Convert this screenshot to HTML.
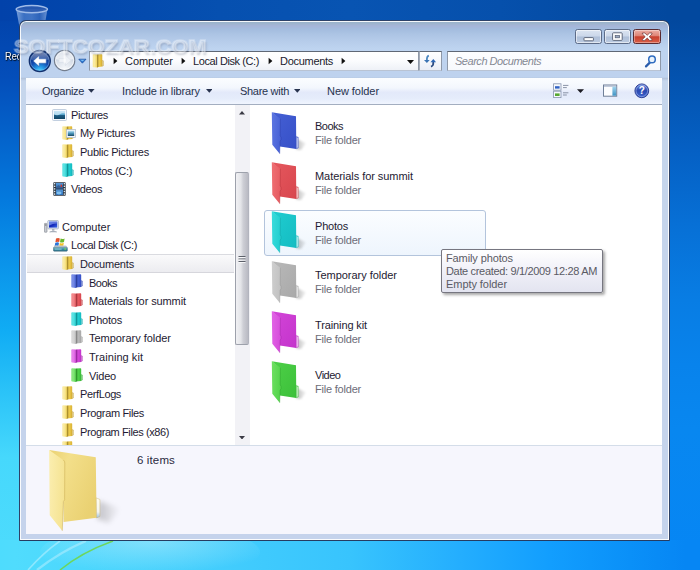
<!DOCTYPE html>
<html lang="en">
<head>
<meta charset="utf-8">
<title>Documents</title>
<style>
html,body{margin:0;padding:0;}
body{width:700px;height:570px;overflow:hidden;position:relative;
  font-family:"Liberation Sans","DejaVu Sans",sans-serif;font-size:11px;color:#1c1c30;
  background:linear-gradient(180deg,#0242aa 0,#0244ac 20px,#044eba 77px,#0464cc 140px,#047ade 200px,#0a94ea 265px,#10acf4 330px,#2cc4f8 395px,#46d8fc 457px,#4edcfd 570px);}
.a{position:absolute;}
.t{position:absolute;white-space:nowrap;line-height:16px;height:16px;}
#desk-top{left:0;top:0;width:700px;height:21px;background:linear-gradient(90deg,#0242aa 0,#0246ac 72px,#0650b0 220px,#0854b2 350px,#0650ac 500px,#02489e 670px,#02489e 700px);}
#desk-right{left:666px;top:0;width:34px;height:570px;background:linear-gradient(180deg,#02489e 0,#02489e 20px,#0560c4 150px,#0770d6 225px,#087de4 300px,#0883ec 365px,#0887f0 430px,#0686f4 557px,#0686f4 570px);}
#desk-bottom{left:0;top:540px;width:700px;height:30px;background:linear-gradient(90deg,#4edcfd 0,#50dcfd 15px,#46d0fd 180px,#38c4fd 350px,#24aefe 460px,#129efe 550px,#0a90f8 630px,#0686f4 685px,#0686f4 700px);}
#win{left:19px;top:20px;width:650.7px;height:521px;box-sizing:border-box;
  border:1px solid rgba(12,34,74,.82);border-radius:7px 7px 1px 1px;
  background:linear-gradient(180deg,#98b0c8 0px,#9cb4cc 2px,#a6b5d8 5px,#a3bcde 8px,#acc4e4 13px,#b6ccea 20px,#bed4f0 28px,#bed2ee 50px,#bed2ee 56px,#b4c4dc 57.5px,#c6d6ec 60px,#c5d5ec 120px,#c5d3ec 100%);
  box-shadow:inset 0 0 0 1px rgba(255,255,255,.9);}
/* address bar */
#addr{left:89px;top:51px;width:330px;height:20px;box-sizing:border-box;border:1px solid #8e98a8;border-top-color:#5f6876;border-bottom-color:#b9c3d3;
  background:linear-gradient(180deg,#ffffff 0,#fbfcfe 50%,#eef1f7 100%);}
#refresh{left:419px;top:51px;width:23px;height:20px;box-sizing:border-box;border:1px solid #8e98a8;border-left:1px solid #a5adba;border-top-color:#5f6876;border-bottom-color:#b9c3d3;
  background:linear-gradient(180deg,#ffffff 0,#f6f8fc 50%,#e8edf6 100%);}
#search{left:447px;top:51px;width:214px;height:20px;box-sizing:border-box;border:1px solid #8e98a8;border-top-color:#5f6876;border-bottom-color:#b9c3d3;
  background:linear-gradient(180deg,#fdfeff 0,#f7f9fd 100%);}
.crumb{color:#1a1a2c;}
.search{color:#858994;font-style:italic;}
/* toolbar */
#toolbar{left:26px;top:77.5px;width:636px;height:27.5px;box-sizing:border-box;border-bottom:1px solid #a3aec0;
  background:linear-gradient(180deg,#fbfdff 0,#f3f7fd 38%,#e3e9fa 55%,#e5ecfb 78%,#f0f5fe 100%);}
.tb{color:#27334f;}
/* content */
#content{left:26px;top:105px;width:636px;height:340.5px;background:#fff;}
#details{left:26px;top:445.3px;width:636px;height:89.2px;box-sizing:border-box;border-top:1px solid #d4dde9;background:#f6f6fd;}
.nav{color:#1e1a32;}
.fname{color:#1e1a32;}
.ftype{color:#6d6d78;}
.tip{color:#5a5a64;}
.det{color:#2a2a40;}
.desk{color:#fff;text-shadow:1px 1px 1px #000,0 0 2px rgba(0,0,0,.8);}
.wm{font-weight:bold;color:rgba(255,255,255,.30);-webkit-text-stroke:1.7px rgba(255,255,255,.30);text-shadow:1px 2px 2px rgba(70,80,110,.30);}
#navsel{left:27px;top:254px;width:207px;height:19px;box-sizing:border-box;border-top:1px solid #dadbe0;border-bottom:1px solid #d6d6dc;
  background:linear-gradient(180deg,#fafafb 0,#ececf0 100%);}
#hover{left:264px;top:209.5px;width:222px;height:46px;box-sizing:border-box;border:1px solid #b3c4dc;border-radius:3px;
  background:linear-gradient(180deg,#fbfdff 0,#eef5fd 100%);}
#tooltip{left:441px;top:249px;width:162px;height:43.5px;box-sizing:border-box;border:1px solid #767680;border-radius:2px;
  background:linear-gradient(180deg,#ffffff 0,#f0f0f8 50%,#e3e4f0 100%);box-shadow:2px 2px 3px rgba(0,0,0,.35);}
/* scrollbar */
#sb{left:235px;top:105px;width:15px;height:340px;background:#f2f2f6;}
#thumb{left:235px;top:172px;width:13.5px;height:173px;box-sizing:border-box;border:1px solid #9da1ab;border-right-color:#b2b4be;border-radius:2px;
  background:linear-gradient(90deg,#f1f1f4 0,#e4e5e9 40%,#cdced5 60%,#b9bac3 100%);}
.capbtn{top:29px;height:14.5px;box-sizing:border-box;border:1px solid #5d6c88;border-radius:2.5px;
  background:linear-gradient(180deg,#dbe4f1 0,#cbd7e9 48%,#aebfd8 52%,#bccbe1 100%);box-shadow:inset 0 0 0 1px rgba(255,255,255,.55);}
#close{background:linear-gradient(180deg,#ecb0a6 0,#de8375 45%,#c8402e 52%,#d95f48 100%);border-color:#5a2a30;box-shadow:inset 0 0 0 1px rgba(255,255,255,.35);}
</style>
</head>
<body>
<div class="a" id="desk-top"></div>
<div class="a" id="desk-right"></div>
<div class="a" id="desk-bottom"></div>
<svg class="a" style="left:12px;top:2px" width="40" height="30" viewBox="0 0 40 30">
<defs><linearGradient id="rb" x1="0" y1="0" x2="1" y2="0"><stop offset="0" stop-color="#8fb2e4" stop-opacity=".85"/><stop offset=".25" stop-color="#5a88d0" stop-opacity=".65"/><stop offset=".5" stop-color="#6a94d6" stop-opacity=".6"/><stop offset=".75" stop-color="#4a78c4" stop-opacity=".6"/><stop offset="1" stop-color="#86a8de" stop-opacity=".8"/></linearGradient></defs>
<path d="M4.2 7.2 L8.4 30 L31.6 30 L35.4 7.2 Z" fill="url(#rb)"/>
<ellipse cx="19.8" cy="7.2" rx="15.6" ry="3.6" fill="#2f5cb0" fill-opacity=".8" stroke="#9fbbe8" stroke-width="1.5"/>
</svg><svg class="a" style="left:0;top:541px" width="320" height="29" viewBox="0 541 320 29">
<defs><radialGradient id="sw1" cx=".5" cy=".3" r=".6"><stop offset="0" stop-color="#aeeafc" stop-opacity=".55"/><stop offset="1" stop-color="#aeeafc" stop-opacity="0"/></radialGradient></defs>
<ellipse cx="150" cy="552" rx="110" ry="26" fill="url(#sw1)"/>
<path d="M28 570 Q44 552 60 541" stroke="#d8f6ff" stroke-opacity=".45" stroke-width="1.6" fill="none"/>
<path d="M37 570 Q60 552 86 541" stroke="#d8f6ff" stroke-opacity=".4" stroke-width="2.4" fill="none"/>
<path d="M60 570 Q82 552 113 541" stroke="#6fd64a" stroke-opacity=".9" stroke-width="1.5" fill="none"/>
</svg><span class="t desk" style="left:5.2px;top:48.1px;font-size:11.5px;transform:scaleX(.8);transform-origin:0 0;">Recycle Bin</span>
<div class="a" id="win"></div>
<div class="a capbtn" style="left:575px;width:27px"></div>
<div class="a capbtn" style="left:604px;width:27px"></div>
<div class="a capbtn" id="close" style="left:633px;width:28px"></div>
<div class="a" id="addr"></div>
<div class="a" id="refresh"></div>
<div class="a" id="search"></div>
<div class="a" id="toolbar"></div>
<div class="a" id="content"></div>
<div class="a" id="details"></div>
<div class="a" id="navsel"></div>
<div class="a" id="sb"></div>
<div class="a" id="thumb"></div>
<div class="a" id="hover"></div>
<svg class="a" style="left:26px;top:47px" width="64" height="28" viewBox="0 0 64 28">
<defs>
<radialGradient id="nb1" cx=".5" cy="1" r=".8"><stop offset="0" stop-color="#58dcff"/><stop offset=".3" stop-color="#2496e4"/><stop offset=".62" stop-color="#134cb0"/><stop offset="1" stop-color="#0e3488"/></radialGradient>
<linearGradient id="nb2" x1="0" y1="0" x2="0" y2="1"><stop offset="0" stop-color="#fff" stop-opacity=".5"/><stop offset="1" stop-color="#fff" stop-opacity=".08"/></linearGradient>
<radialGradient id="nb3" cx=".5" cy=".9" r=".8"><stop offset="0" stop-color="#f6f8fb"/><stop offset=".6" stop-color="#d8dfe9"/><stop offset="1" stop-color="#bcc7d8"/></radialGradient>
</defs>
<circle cx="13.8" cy="14" r="10.5" fill="url(#nb1)" stroke="#12306e" stroke-width="1.3"/>
<circle cx="13.8" cy="14" r="9.4" fill="none" stroke="#9ecbf4" stroke-opacity=".55" stroke-width=".8"/>
<path d="M4.6 12.6 A9.3 9.3 0 0 1 23 12.6 Q13.8 16.4 4.6 12.6 Z" fill="url(#nb2)"/>
<path d="M7.2 14 L13.2 8.4 L13.2 11.8 L20.2 11.8 L20.2 16.2 L13.2 16.2 L13.2 19.6 Z" fill="#fff" stroke="#2a5aa8" stroke-width=".5"/>
<circle cx="38.6" cy="13.4" r="10.2" fill="url(#nb3)" stroke="#747e8e" stroke-width="1.1"/>
<circle cx="38.6" cy="13.4" r="9" fill="none" stroke="#fff" stroke-opacity=".8" stroke-width=".9"/>
<path d="M29.8 12 A8.9 8.9 0 0 1 47.4 12 Q38.6 15.4 29.8 12 Z" fill="#fff" fill-opacity=".55"/>
<path d="M45 13.4 L39.4 8.2 L39.4 11.4 L33 11.4 L33 15.4 L39.4 15.4 L39.4 18.6 Z" fill="#eef1f6" stroke="#d2d9e3" stroke-width=".5"/>
<rect x="37.6" y="4.4" width="2.2" height="12" rx="1" fill="#fff" fill-opacity=".7"/>
<path d="M52.8 12.2 L60 12.2 L56.4 16.2 Z" fill="#2a76d0" stroke="#1a4c9c" stroke-width=".7" stroke-linejoin="round"/>
<path d="M54 12.7 L58.8 12.7 L56.4 14.2 Z" fill="#8fd0ff" fill-opacity=".8"/>
</svg>
<svg class="a" style="left:575px;top:29px" width="87" height="16" viewBox="0 0 87 16">
<rect x="9" y="8.6" width="9.4" height="3.2" rx=".6" fill="#fff" stroke="#525c70" stroke-width=".9"/>
<rect x="37.6" y="3.8" width="9.6" height="7.6" rx=".8" fill="#fff" stroke="#525c70" stroke-width=".9"/>
<rect x="40.2" y="6.6" width="4.4" height="2.2" fill="#9aa8c0" stroke="#525c70" stroke-width=".7"/>
<path d="M67.4 4 L69.8 4 L72.2 6.3 L74.6 4 L77 4 L77 5 L74.2 7.7 L77 10.4 L77 11.4 L74.6 11.4 L72.2 9.1 L69.8 11.4 L67.4 11.4 L67.4 10.4 L70.2 7.7 L67.4 5 Z" fill="#fff" stroke="#6a3030" stroke-width=".7" stroke-linejoin="round"/>
</svg>
<svg class="a" style="left:92.3px;top:53.8px" width="12.4" height="14" viewBox="0 0 12 14.4">
<defs><linearGradient id="g63" x1="0" y1="0" x2="1" y2="0"><stop offset="0" stop-color="#f9e68e"/><stop offset=".3" stop-color="#faeca7"/><stop offset="1" stop-color="#f2d65c"/></linearGradient>
<linearGradient id="g64" x1="0" y1="0" x2="1" y2="0"><stop offset="0" stop-color="#aa8b2a"/><stop offset=".45" stop-color="#eccb4c"/><stop offset="1" stop-color="#dab236"/></linearGradient></defs>
<path d="M4.8 .5 L9.5 .3 Q10.2 .3 10.2 1 L10.2 12.9 L4.8 13.6 Z" fill="url(#g64)"/>
<path d="M10.2 6.6 L11.4 7 L11.4 12 L10.2 12.5 Z" fill="#f3dd8b" stroke="#a88224" stroke-width=".35"/>
<path d="M.4 1 Q.4 .3 1.1 .3 L4.5 .5 Q5.1 .6 5.1 1.3 L5.1 14 L1 13.5 Q.4 13.4 .4 12.8 Z" fill="url(#g63)"/>
<path d="M5.25 1 L5.25 13.9" stroke="#7e621b" stroke-width=".55" stroke-opacity=".75"/>
</svg>
<svg class="a" style="left:112.5px;top:57px" width="5" height="8" viewBox="0 0 5 8"><path d="M.6 .8 L4.4 4 L.6 7.2 Z" fill="#111"/></svg>
<svg class="a" style="left:180.5px;top:57px" width="5" height="8" viewBox="0 0 5 8"><path d="M.6 .8 L4.4 4 L.6 7.2 Z" fill="#111"/></svg>
<svg class="a" style="left:267.5px;top:57px" width="5" height="8" viewBox="0 0 5 8"><path d="M.6 .8 L4.4 4 L.6 7.2 Z" fill="#111"/></svg>
<svg class="a" style="left:341.0px;top:57px" width="5" height="8" viewBox="0 0 5 8"><path d="M.6 .8 L4.4 4 L.6 7.2 Z" fill="#111"/></svg>
<svg class="a" style="left:406.7px;top:59.5px" width="7" height="4" viewBox="0 0 7 4"><path d="M0 0 L7 0 L3.5 4 Z" fill="#111"/></svg>
<svg class="a" style="left:423px;top:54px" width="15" height="14" viewBox="0 0 15 14">
<path d="M5.8 1.5 Q3.5 2.6 3.9 6.4" fill="none" stroke="#4a86c0" stroke-width="1.7"/>
<path d="M1 5.9 L6.7 5.9 L3.9 9 Z" fill="#3a74b4"/>
<path d="M10.3 7.8 Q10.7 11.6 8 12.6" fill="none" stroke="#2a4a80" stroke-width="1.7"/>
<path d="M7.5 8.3 L13.1 8.3 L10.3 5.1 Z" fill="#2c66b4"/>
</svg>
<svg class="a" style="left:644px;top:54px" width="13" height="14" viewBox="0 0 13 14">
<path d="M6 8.4 L2 12.4" stroke="#2a5cab" stroke-width="2.2" stroke-linecap="round"/>
<circle cx="8" cy="5.4" r="3.3" fill="#e8f2fc" stroke="#2f6cc0" stroke-width="1.5"/>
</svg>
<svg class="a" style="left:553px;top:82px" width="100" height="18" viewBox="0 0 100 18">
<defs><linearGradient id="hp" x1="0" y1="0" x2="0" y2="1"><stop offset="0" stop-color="#6f8fe0"/><stop offset=".5" stop-color="#2a48b0"/><stop offset="1" stop-color="#3f66d0"/></linearGradient>
<linearGradient id="pp" x1="0" y1="0" x2="0" y2="1"><stop offset="0" stop-color="#9fd4ee"/><stop offset="1" stop-color="#3f93c4"/></linearGradient></defs>
<rect x=".6" y="1.8" width="7.4" height="6.4" fill="#f6f9fd" stroke="#8794ac" stroke-width=".8"/>
<rect x="2" y="4.2" width="4.6" height="2.4" fill="#2f62c4"/>
<rect x=".6" y="9.2" width="7.4" height="6.4" fill="#f6f9fd" stroke="#8794ac" stroke-width=".8"/>
<rect x="2" y="11.4" width="4.6" height="2.6" fill="#58a832"/>
<path d="M10 3.4 H15.4 M10 5.6 H13.8 M10 10.8 H15.4 M10 13 H13.8" stroke="#8a93a6" stroke-width="1"/>
<path d="M24 7.2 L31 7.2 L27.5 11 Z" fill="#1a1a22"/>
<rect x="50.5" y="3" width="13.2" height="11.2" fill="#fcfdff" stroke="#6f7f98" stroke-width="1"/>
<rect x="51" y="3.5" width="12.2" height="1.2" fill="#a9b6cc"/>
<rect x="59.4" y="4.7" width="3.8" height="9" fill="url(#pp)"/>
<circle cx="88.8" cy="8.8" r="6.9" fill="url(#hp)" stroke="#26388c" stroke-width=".9"/>
<circle cx="88.8" cy="8.8" r="5.8" fill="none" stroke="#b9caf4" stroke-opacity=".7" stroke-width=".7"/>
<text x="88.8" y="12.4" font-family="Liberation Sans, sans-serif" font-weight="bold" font-size="10" fill="#fff" text-anchor="middle">?</text>
</svg>
<svg class="a" style="left:239.0px;top:111.25px" width="6" height="3.5" viewBox="0 0 7 4"><path d="M0 4 L7 4 L3.5 0 Z" fill="#3a3a44"/></svg><svg class="a" style="left:239.0px;top:435.75px" width="6" height="3.5" viewBox="0 0 7 4"><path d="M0 0 L7 0 L3.5 4 Z" fill="#3a3a44"/></svg><svg class="a" style="left:238px;top:255px" width="8" height="8" viewBox="0 0 8 8"><path d="M.5 1.5 H7.5 M.5 4 H7.5 M.5 6.5 H7.5" stroke="#5c606a" stroke-width="1"/><path d="M.5 2.5 H7.5 M.5 5 H7.5 M.5 7.5 H7.5" stroke="#fff" stroke-opacity=".8" stroke-width="1"/></svg>
<svg class="a" style="left:88.3px;top:89.1px" width="6.6" height="3.8" viewBox="0 0 7 4"><path d="M0 0 L7 0 L3.5 4 Z" fill="#27334f"/></svg>
<svg class="a" style="left:205.89999999999998px;top:89.1px" width="6.6" height="3.8" viewBox="0 0 7 4"><path d="M0 0 L7 0 L3.5 4 Z" fill="#27334f"/></svg>
<svg class="a" style="left:293.5px;top:89.1px" width="6.6" height="3.8" viewBox="0 0 7 4"><path d="M0 0 L7 0 L3.5 4 Z" fill="#27334f"/></svg>
<svg class="a" style="left:52px;top:109.0px" width="15" height="12" viewBox="0 0 15 12">
<defs><linearGradient id="g1" x1="0" y1="0" x2="0" y2="1"><stop offset="0" stop-color="#b8e0f4"/><stop offset=".45" stop-color="#5aa6cc"/><stop offset=".55" stop-color="#1d5f86"/><stop offset="1" stop-color="#0f4464"/></linearGradient></defs>
<rect x=".5" y=".5" width="14" height="11" rx="1" fill="#f4f8fc" stroke="#b4c4d8" stroke-width=".8"/>
<rect x="2" y="2" width="11" height="8" fill="url(#g1)"/>
<path d="M2 5 Q5 7.5 8 5.2 T13 4.6 L13 2 L2 2 Z" fill="#cfeaf8" fill-opacity=".75"/>
</svg>
<svg class="a" style="left:62.4px;top:125.53px" width="12" height="14.4" viewBox="0 0 12 14.4">
<defs><linearGradient id="g3" x1="0" y1="0" x2="1" y2="0"><stop offset="0" stop-color="#f9e68e"/><stop offset=".3" stop-color="#faeca7"/><stop offset="1" stop-color="#f2d65c"/></linearGradient>
<linearGradient id="g4" x1="0" y1="0" x2="1" y2="0"><stop offset="0" stop-color="#aa8b2a"/><stop offset=".45" stop-color="#eccb4c"/><stop offset="1" stop-color="#dab236"/></linearGradient></defs>
<path d="M4.8 .5 L9.5 .3 Q10.2 .3 10.2 1 L10.2 12.9 L4.8 13.6 Z" fill="url(#g4)"/>
<path d="M10.2 6.6 L11.4 7 L11.4 12 L10.2 12.5 Z" fill="#f3dd8b" stroke="#a88224" stroke-width=".35"/>
<path d="M.4 1 Q.4 .3 1.1 .3 L4.5 .5 Q5.1 .6 5.1 1.3 L5.1 14 L1 13.5 Q.4 13.4 .4 12.8 Z" fill="url(#g3)"/>
<path d="M5.25 1 L5.25 13.9" stroke="#7e621b" stroke-width=".55" stroke-opacity=".75"/>
</svg><svg class="a" style="left:66.4px;top:129.03px" width="10" height="9" viewBox="0 0 10 9">
<defs><linearGradient id="g2" x1="0" y1="0" x2="0" y2="1"><stop offset="0" stop-color="#b8e0f4"/><stop offset=".5" stop-color="#4a94b8"/><stop offset="1" stop-color="#174a68"/></linearGradient></defs>
<rect x=".4" y=".4" width="9.2" height="8.2" fill="#f2f6fa" stroke="#aab8c8" stroke-width=".7"/>
<rect x="1.8" y="1.8" width="6.4" height="5.2" fill="url(#g2)"/></svg>
<svg class="a" style="left:62.3px;top:143.96px" width="12" height="14.4" viewBox="0 0 12 14.4">
<defs><linearGradient id="g5" x1="0" y1="0" x2="1" y2="0"><stop offset="0" stop-color="#f9e68e"/><stop offset=".3" stop-color="#faeca7"/><stop offset="1" stop-color="#f2d65c"/></linearGradient>
<linearGradient id="g6" x1="0" y1="0" x2="1" y2="0"><stop offset="0" stop-color="#aa8b2a"/><stop offset=".45" stop-color="#eccb4c"/><stop offset="1" stop-color="#dab236"/></linearGradient></defs>
<path d="M4.8 .5 L9.5 .3 Q10.2 .3 10.2 1 L10.2 12.9 L4.8 13.6 Z" fill="url(#g6)"/>
<path d="M10.2 6.6 L11.4 7 L11.4 12 L10.2 12.5 Z" fill="#f3dd8b" stroke="#a88224" stroke-width=".35"/>
<path d="M.4 1 Q.4 .3 1.1 .3 L4.5 .5 Q5.1 .6 5.1 1.3 L5.1 14 L1 13.5 Q.4 13.4 .4 12.8 Z" fill="url(#g5)"/>
<path d="M5.25 1 L5.25 13.9" stroke="#7e621b" stroke-width=".55" stroke-opacity=".75"/>
</svg>
<svg class="a" style="left:62.3px;top:162.59px" width="12" height="14.4" viewBox="0 0 12 14.4">
<defs><linearGradient id="g7" x1="0" y1="0" x2="1" y2="0"><stop offset="0" stop-color="#3adcdc"/><stop offset=".3" stop-color="#65e4e4"/><stop offset="1" stop-color="#22cfd0"/></linearGradient>
<linearGradient id="g8" x1="0" y1="0" x2="1" y2="0"><stop offset="0" stop-color="#109397"/><stop offset=".45" stop-color="#20cdd0"/><stop offset="1" stop-color="#14bcc2"/></linearGradient></defs>
<path d="M4.8 .5 L9.5 .3 Q10.2 .3 10.2 1 L10.2 12.9 L4.8 13.6 Z" fill="url(#g8)"/>
<path d="M10.2 6.6 L11.4 7 L11.4 12 L10.2 12.5 Z" fill="#6edee0" stroke="#0f9499" stroke-width=".35"/>
<path d="M.4 1 Q.4 .3 1.1 .3 L4.5 .5 Q5.1 .6 5.1 1.3 L5.1 14 L1 13.5 Q.4 13.4 .4 12.8 Z" fill="url(#g7)"/>
<path d="M5.25 1 L5.25 13.9" stroke="#0b6f73" stroke-width=".55" stroke-opacity=".75"/>
</svg>
<svg class="a" style="left:53.4px;top:181.82px" width="13" height="14" viewBox="0 0 13 14">
<defs><linearGradient id="g9" x1="0" y1="0" x2="0" y2="1"><stop offset="0" stop-color="#5a9ad8"/><stop offset="1" stop-color="#2a6cb8"/></linearGradient></defs>
<rect x=".3" y=".2" width="12.4" height="13.6" rx=".8" fill="#28323e"/>
<rect x="0.9" y="1.0" width="1.4" height="1.4" fill="#dfe8f0"/><rect x="10.7" y="1.0" width="1.4" height="1.4" fill="#dfe8f0"/><rect x="0.9" y="3.6" width="1.4" height="1.4" fill="#dfe8f0"/><rect x="10.7" y="3.6" width="1.4" height="1.4" fill="#dfe8f0"/><rect x="0.9" y="6.2" width="1.4" height="1.4" fill="#dfe8f0"/><rect x="10.7" y="6.2" width="1.4" height="1.4" fill="#dfe8f0"/><rect x="0.9" y="8.8" width="1.4" height="1.4" fill="#dfe8f0"/><rect x="10.7" y="8.8" width="1.4" height="1.4" fill="#dfe8f0"/><rect x="0.9" y="11.4" width="1.4" height="1.4" fill="#dfe8f0"/><rect x="10.7" y="11.4" width="1.4" height="1.4" fill="#dfe8f0"/>
<rect x="3" y="1" width="7" height="5.4" fill="url(#g9)"/>
<rect x="3" y="7.4" width="7" height="5.6" fill="url(#g9)"/>
<path d="M3 5 L5.5 3 L7.5 4.6 L10 2.6 L10 6.4 L3 6.4 Z" fill="#3a5a8a" fill-opacity=".8"/>
<rect x="7.6" y="2.6" width="1.4" height="2.4" fill="#d03a30"/>
<ellipse cx="6" cy="11" rx="2.6" ry="1.4" fill="#7fc0f0"/>
</svg>
<svg class="a" style="left:43.6px;top:219.88px" width="15" height="13" viewBox="0 0 15 13">
<defs><linearGradient id="g10" x1="0" y1="0" x2="1" y2="1"><stop offset="0" stop-color="#2a4fe0"/><stop offset=".5" stop-color="#1428b8"/><stop offset="1" stop-color="#3a6ae8"/></linearGradient></defs>
<rect x=".4" y="3.4" width="2.6" height="8.8" rx=".5" fill="#c8ccd2" stroke="#7c828c" stroke-width=".6"/>
<rect x="1" y="4.6" width="1.4" height=".8" fill="#555"/>
<rect x="3.8" y=".5" width="10.6" height="8.4" rx=".8" fill="#e6ecf4" stroke="#9aa6b8" stroke-width=".7"/>
<rect x="5" y="1.6" width="8.2" height="6" fill="url(#g10)"/>
<path d="M5 1.6 L13.2 1.6 L13.2 3.4 Q9 3.2 5 5.6 Z" fill="#9ab4f8" fill-opacity=".55"/>
<rect x="8" y="9" width="2.4" height="1.6" fill="#aab2be"/>
<path d="M5.6 12 Q9.2 10 12.8 12 Z" fill="#b4bcc8" stroke="#8a929e" stroke-width=".4"/>
</svg>
<svg class="a" style="left:52.6px;top:236.70999999999998px" width="15" height="15" viewBox="0 0 15 15">
<defs><linearGradient id="g11" x1="0" y1="0" x2="0" y2="1"><stop offset="0" stop-color="#7ab8c8"/><stop offset=".5" stop-color="#3a8ea4"/><stop offset="1" stop-color="#2a6e88"/></linearGradient></defs>
<path d="M3 1.6 Q5 .4 6.8 1.4 L6.2 5 Q4.6 4.2 2.4 5.2 Z" fill="#e0502c"/>
<path d="M7.6 1.6 Q9.4 2.6 11.6 1.4 L11 5 Q8.8 6 7 5.2 Z" fill="#6cb82c"/>
<path d="M2.2 5.9 Q4.4 4.9 6 5.8 L5.4 9.2 Q3.6 8.4 1.6 9.4 Z" fill="#2a74d8"/>
<path d="M6.8 6 Q8.6 6.9 10.8 5.8 L10.2 9.2 Q8 10.2 6.2 9.4 Z" fill="#f4c020"/>
<path d="M1.6 8.6 L13 8.6 L14.4 10.4 L.4 10.4 Z" fill="#c4ccd4"/>
<rect x=".4" y="10.2" width="14" height="4" rx=".8" fill="url(#g11)" stroke="#4a6a7a" stroke-width=".5"/>
<rect x="1.6" y="11.6" width="7" height="1" fill="#a8dce8" fill-opacity=".8"/>
<rect x="11.4" y="11.4" width="1.6" height="1.2" fill="#7fe04a"/>
</svg>
<svg class="a" style="left:62.3px;top:255.73999999999998px" width="12" height="14.4" viewBox="0 0 12 14.4">
<defs><linearGradient id="g12" x1="0" y1="0" x2="1" y2="0"><stop offset="0" stop-color="#f9e68e"/><stop offset=".3" stop-color="#faeca7"/><stop offset="1" stop-color="#f2d65c"/></linearGradient>
<linearGradient id="g13" x1="0" y1="0" x2="1" y2="0"><stop offset="0" stop-color="#aa8b2a"/><stop offset=".45" stop-color="#eccb4c"/><stop offset="1" stop-color="#dab236"/></linearGradient></defs>
<path d="M4.8 .5 L9.5 .3 Q10.2 .3 10.2 1 L10.2 12.9 L4.8 13.6 Z" fill="url(#g13)"/>
<path d="M10.2 6.6 L11.4 7 L11.4 12 L10.2 12.5 Z" fill="#f3dd8b" stroke="#a88224" stroke-width=".35"/>
<path d="M.4 1 Q.4 .3 1.1 .3 L4.5 .5 Q5.1 .6 5.1 1.3 L5.1 14 L1 13.5 Q.4 13.4 .4 12.8 Z" fill="url(#g12)"/>
<path d="M5.25 1 L5.25 13.9" stroke="#7e621b" stroke-width=".55" stroke-opacity=".75"/>
</svg>
<svg class="a" style="left:71.3px;top:274.36999999999995px" width="12" height="14.4" viewBox="0 0 12 14.4">
<defs><linearGradient id="g14" x1="0" y1="0" x2="1" y2="0"><stop offset="0" stop-color="#5c76e2"/><stop offset=".3" stop-color="#8094e8"/><stop offset="1" stop-color="#4862d6"/></linearGradient>
<linearGradient id="g15" x1="0" y1="0" x2="1" y2="0"><stop offset="0" stop-color="#2a3e9c"/><stop offset=".45" stop-color="#4560d4"/><stop offset="1" stop-color="#3650c8"/></linearGradient></defs>
<path d="M4.8 .5 L9.5 .3 Q10.2 .3 10.2 1 L10.2 12.9 L4.8 13.6 Z" fill="url(#g15)"/>
<path d="M10.2 6.6 L11.4 7 L11.4 12 L10.2 12.5 Z" fill="#8698e3" stroke="#2438a0" stroke-width=".35"/>
<path d="M.4 1 Q.4 .3 1.1 .3 L4.5 .5 Q5.1 .6 5.1 1.3 L5.1 14 L1 13.5 Q.4 13.4 .4 12.8 Z" fill="url(#g14)"/>
<path d="M5.25 1 L5.25 13.9" stroke="#1b2a78" stroke-width=".55" stroke-opacity=".75"/>
</svg>
<svg class="a" style="left:71.3px;top:292.99999999999994px" width="12" height="14.4" viewBox="0 0 12 14.4">
<defs><linearGradient id="g16" x1="0" y1="0" x2="1" y2="0"><stop offset="0" stop-color="#f07074"/><stop offset=".3" stop-color="#f38f93"/><stop offset="1" stop-color="#e65c62"/></linearGradient>
<linearGradient id="g17" x1="0" y1="0" x2="1" y2="0"><stop offset="0" stop-color="#a8373d"/><stop offset=".45" stop-color="#e5585e"/><stop offset="1" stop-color="#d8464e"/></linearGradient></defs>
<path d="M4.8 .5 L9.5 .3 Q10.2 .3 10.2 1 L10.2 12.9 L4.8 13.6 Z" fill="url(#g17)"/>
<path d="M10.2 6.6 L11.4 7 L11.4 12 L10.2 12.5 Z" fill="#ee9296" stroke="#a82830" stroke-width=".35"/>
<path d="M.4 1 Q.4 .3 1.1 .3 L4.5 .5 Q5.1 .6 5.1 1.3 L5.1 14 L1 13.5 Q.4 13.4 .4 12.8 Z" fill="url(#g16)"/>
<path d="M5.25 1 L5.25 13.9" stroke="#7e1e24" stroke-width=".55" stroke-opacity=".75"/>
</svg>
<svg class="a" style="left:71.3px;top:311.62999999999994px" width="12" height="14.4" viewBox="0 0 12 14.4">
<defs><linearGradient id="g18" x1="0" y1="0" x2="1" y2="0"><stop offset="0" stop-color="#3adcdc"/><stop offset=".3" stop-color="#65e4e4"/><stop offset="1" stop-color="#22cfd0"/></linearGradient>
<linearGradient id="g19" x1="0" y1="0" x2="1" y2="0"><stop offset="0" stop-color="#109397"/><stop offset=".45" stop-color="#20cdd0"/><stop offset="1" stop-color="#14bcc2"/></linearGradient></defs>
<path d="M4.8 .5 L9.5 .3 Q10.2 .3 10.2 1 L10.2 12.9 L4.8 13.6 Z" fill="url(#g19)"/>
<path d="M10.2 6.6 L11.4 7 L11.4 12 L10.2 12.5 Z" fill="#6edee0" stroke="#0f9499" stroke-width=".35"/>
<path d="M.4 1 Q.4 .3 1.1 .3 L4.5 .5 Q5.1 .6 5.1 1.3 L5.1 14 L1 13.5 Q.4 13.4 .4 12.8 Z" fill="url(#g18)"/>
<path d="M5.25 1 L5.25 13.9" stroke="#0b6f73" stroke-width=".55" stroke-opacity=".75"/>
</svg>
<svg class="a" style="left:71.3px;top:330.26px" width="12" height="14.4" viewBox="0 0 12 14.4">
<defs><linearGradient id="g20" x1="0" y1="0" x2="1" y2="0"><stop offset="0" stop-color="#cfcfcf"/><stop offset=".3" stop-color="#dadada"/><stop offset="1" stop-color="#c2c2c2"/></linearGradient>
<linearGradient id="g21" x1="0" y1="0" x2="1" y2="0"><stop offset="0" stop-color="#848484"/><stop offset=".45" stop-color="#b9b9b9"/><stop offset="1" stop-color="#a9a9a9"/></linearGradient></defs>
<path d="M4.8 .5 L9.5 .3 Q10.2 .3 10.2 1 L10.2 12.9 L4.8 13.6 Z" fill="url(#g21)"/>
<path d="M10.2 6.6 L11.4 7 L11.4 12 L10.2 12.5 Z" fill="#d2d2d2" stroke="#8a8a8a" stroke-width=".35"/>
<path d="M.4 1 Q.4 .3 1.1 .3 L4.5 .5 Q5.1 .6 5.1 1.3 L5.1 14 L1 13.5 Q.4 13.4 .4 12.8 Z" fill="url(#g20)"/>
<path d="M5.25 1 L5.25 13.9" stroke="#686868" stroke-width=".55" stroke-opacity=".75"/>
</svg>
<svg class="a" style="left:71.3px;top:348.89px" width="12" height="14.4" viewBox="0 0 12 14.4">
<defs><linearGradient id="g22" x1="0" y1="0" x2="1" y2="0"><stop offset="0" stop-color="#e265e6"/><stop offset=".3" stop-color="#e887ec"/><stop offset="1" stop-color="#d64cdb"/></linearGradient>
<linearGradient id="g23" x1="0" y1="0" x2="1" y2="0"><stop offset="0" stop-color="#99299f"/><stop offset=".45" stop-color="#d345d8"/><stop offset="1" stop-color="#c434cc"/></linearGradient></defs>
<path d="M4.8 .5 L9.5 .3 Q10.2 .3 10.2 1 L10.2 12.9 L4.8 13.6 Z" fill="url(#g23)"/>
<path d="M10.2 6.6 L11.4 7 L11.4 12 L10.2 12.5 Z" fill="#e286e6" stroke="#96209c" stroke-width=".35"/>
<path d="M.4 1 Q.4 .3 1.1 .3 L4.5 .5 Q5.1 .6 5.1 1.3 L5.1 14 L1 13.5 Q.4 13.4 .4 12.8 Z" fill="url(#g22)"/>
<path d="M5.25 1 L5.25 13.9" stroke="#701875" stroke-width=".55" stroke-opacity=".75"/>
</svg>
<svg class="a" style="left:71.3px;top:367.52px" width="12" height="14.4" viewBox="0 0 12 14.4">
<defs><linearGradient id="g24" x1="0" y1="0" x2="1" y2="0"><stop offset="0" stop-color="#6fe062"/><stop offset=".3" stop-color="#8fe785"/><stop offset="1" stop-color="#54d44c"/></linearGradient>
<linearGradient id="g25" x1="0" y1="0" x2="1" y2="0"><stop offset="0" stop-color="#2f962d"/><stop offset=".45" stop-color="#4ed048"/><stop offset="1" stop-color="#3cc03a"/></linearGradient></defs>
<path d="M4.8 .5 L9.5 .3 Q10.2 .3 10.2 1 L10.2 12.9 L4.8 13.6 Z" fill="url(#g25)"/>
<path d="M10.2 6.6 L11.4 7 L11.4 12 L10.2 12.5 Z" fill="#8ce088" stroke="#249424" stroke-width=".35"/>
<path d="M.4 1 Q.4 .3 1.1 .3 L4.5 .5 Q5.1 .6 5.1 1.3 L5.1 14 L1 13.5 Q.4 13.4 .4 12.8 Z" fill="url(#g24)"/>
<path d="M5.25 1 L5.25 13.9" stroke="#1b6f1b" stroke-width=".55" stroke-opacity=".75"/>
</svg>
<svg class="a" style="left:62.3px;top:386.15px" width="12" height="14.4" viewBox="0 0 12 14.4">
<defs><linearGradient id="g26" x1="0" y1="0" x2="1" y2="0"><stop offset="0" stop-color="#f9e68e"/><stop offset=".3" stop-color="#faeca7"/><stop offset="1" stop-color="#f2d65c"/></linearGradient>
<linearGradient id="g27" x1="0" y1="0" x2="1" y2="0"><stop offset="0" stop-color="#aa8b2a"/><stop offset=".45" stop-color="#eccb4c"/><stop offset="1" stop-color="#dab236"/></linearGradient></defs>
<path d="M4.8 .5 L9.5 .3 Q10.2 .3 10.2 1 L10.2 12.9 L4.8 13.6 Z" fill="url(#g27)"/>
<path d="M10.2 6.6 L11.4 7 L11.4 12 L10.2 12.5 Z" fill="#f3dd8b" stroke="#a88224" stroke-width=".35"/>
<path d="M.4 1 Q.4 .3 1.1 .3 L4.5 .5 Q5.1 .6 5.1 1.3 L5.1 14 L1 13.5 Q.4 13.4 .4 12.8 Z" fill="url(#g26)"/>
<path d="M5.25 1 L5.25 13.9" stroke="#7e621b" stroke-width=".55" stroke-opacity=".75"/>
</svg>
<svg class="a" style="left:62.3px;top:404.78px" width="12" height="14.4" viewBox="0 0 12 14.4">
<defs><linearGradient id="g28" x1="0" y1="0" x2="1" y2="0"><stop offset="0" stop-color="#f9e68e"/><stop offset=".3" stop-color="#faeca7"/><stop offset="1" stop-color="#f2d65c"/></linearGradient>
<linearGradient id="g29" x1="0" y1="0" x2="1" y2="0"><stop offset="0" stop-color="#aa8b2a"/><stop offset=".45" stop-color="#eccb4c"/><stop offset="1" stop-color="#dab236"/></linearGradient></defs>
<path d="M4.8 .5 L9.5 .3 Q10.2 .3 10.2 1 L10.2 12.9 L4.8 13.6 Z" fill="url(#g29)"/>
<path d="M10.2 6.6 L11.4 7 L11.4 12 L10.2 12.5 Z" fill="#f3dd8b" stroke="#a88224" stroke-width=".35"/>
<path d="M.4 1 Q.4 .3 1.1 .3 L4.5 .5 Q5.1 .6 5.1 1.3 L5.1 14 L1 13.5 Q.4 13.4 .4 12.8 Z" fill="url(#g28)"/>
<path d="M5.25 1 L5.25 13.9" stroke="#7e621b" stroke-width=".55" stroke-opacity=".75"/>
</svg>
<svg class="a" style="left:62.3px;top:423.40999999999997px" width="12" height="14.4" viewBox="0 0 12 14.4">
<defs><linearGradient id="g30" x1="0" y1="0" x2="1" y2="0"><stop offset="0" stop-color="#f9e68e"/><stop offset=".3" stop-color="#faeca7"/><stop offset="1" stop-color="#f2d65c"/></linearGradient>
<linearGradient id="g31" x1="0" y1="0" x2="1" y2="0"><stop offset="0" stop-color="#aa8b2a"/><stop offset=".45" stop-color="#eccb4c"/><stop offset="1" stop-color="#dab236"/></linearGradient></defs>
<path d="M4.8 .5 L9.5 .3 Q10.2 .3 10.2 1 L10.2 12.9 L4.8 13.6 Z" fill="url(#g31)"/>
<path d="M10.2 6.6 L11.4 7 L11.4 12 L10.2 12.5 Z" fill="#f3dd8b" stroke="#a88224" stroke-width=".35"/>
<path d="M.4 1 Q.4 .3 1.1 .3 L4.5 .5 Q5.1 .6 5.1 1.3 L5.1 14 L1 13.5 Q.4 13.4 .4 12.8 Z" fill="url(#g30)"/>
<path d="M5.25 1 L5.25 13.9" stroke="#7e621b" stroke-width=".55" stroke-opacity=".75"/>
</svg>
<div class="a" style="left:62px;top:441px;width:14px;height:4px;overflow:hidden"><svg class="a" style="left:0.4px;top:0px" width="12" height="14.4" viewBox="0 0 12 14.4">
<defs><linearGradient id="g32" x1="0" y1="0" x2="1" y2="0"><stop offset="0" stop-color="#f9e68e"/><stop offset=".3" stop-color="#faeca7"/><stop offset="1" stop-color="#f2d65c"/></linearGradient>
<linearGradient id="g33" x1="0" y1="0" x2="1" y2="0"><stop offset="0" stop-color="#aa8b2a"/><stop offset=".45" stop-color="#eccb4c"/><stop offset="1" stop-color="#dab236"/></linearGradient></defs>
<path d="M4.8 .5 L9.5 .3 Q10.2 .3 10.2 1 L10.2 12.9 L4.8 13.6 Z" fill="url(#g33)"/>
<path d="M10.2 6.6 L11.4 7 L11.4 12 L10.2 12.5 Z" fill="#f3dd8b" stroke="#a88224" stroke-width=".35"/>
<path d="M.4 1 Q.4 .3 1.1 .3 L4.5 .5 Q5.1 .6 5.1 1.3 L5.1 14 L1 13.5 Q.4 13.4 .4 12.8 Z" fill="url(#g32)"/>
<path d="M5.25 1 L5.25 13.9" stroke="#7e621b" stroke-width=".55" stroke-opacity=".75"/>
</svg></div>
<svg class="a" style="left:270px;top:110.0px" width="42.00" height="46" viewBox="0 0 42 46">
<defs>
<linearGradient id="g34" x1="0" y1="0" x2="1" y2="0.3"><stop offset="0" stop-color="#5c76e2"/><stop offset="1" stop-color="#4862d6"/></linearGradient>
<linearGradient id="g35" x1="0" y1="0" x2="1" y2="1"><stop offset="0" stop-color="#4560d4"/><stop offset="1" stop-color="#3650c8"/></linearGradient>
<linearGradient id="g36" gradientUnits="userSpaceOnUse" x1="26" y1="0" x2="38" y2="0"><stop offset="0" stop-color="#000" stop-opacity=".26"/><stop offset="1" stop-color="#000" stop-opacity="0"/></linearGradient>
<filter id="g37" x="-20%" y="-20%" width="140%" height="140%"><feGaussianBlur stdDeviation="1.1"/></filter>
</defs>
<path d="M26.4 39.6 L27 29 L36 33.5 L31 40 Z" fill="url(#g36)" filter="url(#g37)"/>
<path d="M1.8 2.3 L26 6.3 L26.3 38.9 L9.8 36.6 L9 9 Z" fill="url(#g35)"/>
<path d="M26.2 26.2 L28.4 27.2 L28.4 38 L26.3 39 Z" fill="#7488df" stroke="#2438a0" stroke-width=".4" stroke-opacity=".5"/>
<path d="M27.3 28 L27.3 37.6" stroke="#fff" stroke-width=".7" stroke-opacity=".8"/>
<path d="M1.8 2.3 L10.4 8.7 L10.2 26 L11 27 L11 30 L10.1 31 L9.7 43.8 L2.3 34.7 Z" fill="url(#g34)"/>
<path d="M10.4 8.7 L10.2 26 L11 27 L11 30 L10.1 31 L9.7 43.8" fill="none" stroke="#2438a0" stroke-width=".7" stroke-opacity=".55"/>
</svg>
<svg class="a" style="left:270px;top:159.73px" width="42.00" height="46" viewBox="0 0 42 46">
<defs>
<linearGradient id="g38" x1="0" y1="0" x2="1" y2="0.3"><stop offset="0" stop-color="#f07074"/><stop offset="1" stop-color="#e65c62"/></linearGradient>
<linearGradient id="g39" x1="0" y1="0" x2="1" y2="1"><stop offset="0" stop-color="#e5585e"/><stop offset="1" stop-color="#d8464e"/></linearGradient>
<linearGradient id="g40" gradientUnits="userSpaceOnUse" x1="26" y1="0" x2="38" y2="0"><stop offset="0" stop-color="#000" stop-opacity=".26"/><stop offset="1" stop-color="#000" stop-opacity="0"/></linearGradient>
<filter id="g41" x="-20%" y="-20%" width="140%" height="140%"><feGaussianBlur stdDeviation="1.1"/></filter>
</defs>
<path d="M26.4 39.6 L27 29 L36 33.5 L31 40 Z" fill="url(#g40)" filter="url(#g41)"/>
<path d="M1.8 2.3 L26 6.3 L26.3 38.9 L9.8 36.6 L9 9 Z" fill="url(#g39)"/>
<path d="M26.2 26.2 L28.4 27.2 L28.4 38 L26.3 39 Z" fill="#ec8286" stroke="#a82830" stroke-width=".4" stroke-opacity=".5"/>
<path d="M27.3 28 L27.3 37.6" stroke="#fff" stroke-width=".7" stroke-opacity=".8"/>
<path d="M1.8 2.3 L10.4 8.7 L10.2 26 L11 27 L11 30 L10.1 31 L9.7 43.8 L2.3 34.7 Z" fill="url(#g38)"/>
<path d="M10.4 8.7 L10.2 26 L11 27 L11 30 L10.1 31 L9.7 43.8" fill="none" stroke="#a82830" stroke-width=".7" stroke-opacity=".55"/>
</svg>
<svg class="a" style="left:270px;top:209.45999999999998px" width="42.00" height="46" viewBox="0 0 42 46">
<defs>
<linearGradient id="g42" x1="0" y1="0" x2="1" y2="0.3"><stop offset="0" stop-color="#3adcdc"/><stop offset="1" stop-color="#22cfd0"/></linearGradient>
<linearGradient id="g43" x1="0" y1="0" x2="1" y2="1"><stop offset="0" stop-color="#20cdd0"/><stop offset="1" stop-color="#14bcc2"/></linearGradient>
<linearGradient id="g44" gradientUnits="userSpaceOnUse" x1="26" y1="0" x2="38" y2="0"><stop offset="0" stop-color="#000" stop-opacity=".26"/><stop offset="1" stop-color="#000" stop-opacity="0"/></linearGradient>
<filter id="g45" x="-20%" y="-20%" width="140%" height="140%"><feGaussianBlur stdDeviation="1.1"/></filter>
</defs>
<path d="M26.4 39.6 L27 29 L36 33.5 L31 40 Z" fill="url(#g44)" filter="url(#g45)"/>
<path d="M1.8 2.3 L26 6.3 L26.3 38.9 L9.8 36.6 L9 9 Z" fill="url(#g43)"/>
<path d="M26.2 26.2 L28.4 27.2 L28.4 38 L26.3 39 Z" fill="#58dadc" stroke="#0f9499" stroke-width=".4" stroke-opacity=".5"/>
<path d="M27.3 28 L27.3 37.6" stroke="#fff" stroke-width=".7" stroke-opacity=".8"/>
<path d="M1.8 2.3 L10.4 8.7 L10.2 26 L11 27 L11 30 L10.1 31 L9.7 43.8 L2.3 34.7 Z" fill="url(#g42)"/>
<path d="M10.4 8.7 L10.2 26 L11 27 L11 30 L10.1 31 L9.7 43.8" fill="none" stroke="#0f9499" stroke-width=".7" stroke-opacity=".55"/>
</svg>
<svg class="a" style="left:270px;top:259.19px" width="42.00" height="46" viewBox="0 0 42 46">
<defs>
<linearGradient id="g46" x1="0" y1="0" x2="1" y2="0.3"><stop offset="0" stop-color="#cfcfcf"/><stop offset="1" stop-color="#c2c2c2"/></linearGradient>
<linearGradient id="g47" x1="0" y1="0" x2="1" y2="1"><stop offset="0" stop-color="#b9b9b9"/><stop offset="1" stop-color="#a9a9a9"/></linearGradient>
<linearGradient id="g48" gradientUnits="userSpaceOnUse" x1="26" y1="0" x2="38" y2="0"><stop offset="0" stop-color="#000" stop-opacity=".26"/><stop offset="1" stop-color="#000" stop-opacity="0"/></linearGradient>
<filter id="g49" x="-20%" y="-20%" width="140%" height="140%"><feGaussianBlur stdDeviation="1.1"/></filter>
</defs>
<path d="M26.4 39.6 L27 29 L36 33.5 L31 40 Z" fill="url(#g48)" filter="url(#g49)"/>
<path d="M1.8 2.3 L26 6.3 L26.3 38.9 L9.8 36.6 L9 9 Z" fill="url(#g47)"/>
<path d="M26.2 26.2 L28.4 27.2 L28.4 38 L26.3 39 Z" fill="#cacaca" stroke="#8a8a8a" stroke-width=".4" stroke-opacity=".5"/>
<path d="M27.3 28 L27.3 37.6" stroke="#fff" stroke-width=".7" stroke-opacity=".8"/>
<path d="M1.8 2.3 L10.4 8.7 L10.2 26 L11 27 L11 30 L10.1 31 L9.7 43.8 L2.3 34.7 Z" fill="url(#g46)"/>
<path d="M10.4 8.7 L10.2 26 L11 27 L11 30 L10.1 31 L9.7 43.8" fill="none" stroke="#8a8a8a" stroke-width=".7" stroke-opacity=".55"/>
</svg>
<svg class="a" style="left:270px;top:308.91999999999996px" width="42.00" height="46" viewBox="0 0 42 46">
<defs>
<linearGradient id="g50" x1="0" y1="0" x2="1" y2="0.3"><stop offset="0" stop-color="#e265e6"/><stop offset="1" stop-color="#d64cdb"/></linearGradient>
<linearGradient id="g51" x1="0" y1="0" x2="1" y2="1"><stop offset="0" stop-color="#d345d8"/><stop offset="1" stop-color="#c434cc"/></linearGradient>
<linearGradient id="g52" gradientUnits="userSpaceOnUse" x1="26" y1="0" x2="38" y2="0"><stop offset="0" stop-color="#000" stop-opacity=".26"/><stop offset="1" stop-color="#000" stop-opacity="0"/></linearGradient>
<filter id="g53" x="-20%" y="-20%" width="140%" height="140%"><feGaussianBlur stdDeviation="1.1"/></filter>
</defs>
<path d="M26.4 39.6 L27 29 L36 33.5 L31 40 Z" fill="url(#g52)" filter="url(#g53)"/>
<path d="M1.8 2.3 L26 6.3 L26.3 38.9 L9.8 36.6 L9 9 Z" fill="url(#g51)"/>
<path d="M26.2 26.2 L28.4 27.2 L28.4 38 L26.3 39 Z" fill="#de74e2" stroke="#96209c" stroke-width=".4" stroke-opacity=".5"/>
<path d="M27.3 28 L27.3 37.6" stroke="#fff" stroke-width=".7" stroke-opacity=".8"/>
<path d="M1.8 2.3 L10.4 8.7 L10.2 26 L11 27 L11 30 L10.1 31 L9.7 43.8 L2.3 34.7 Z" fill="url(#g50)"/>
<path d="M10.4 8.7 L10.2 26 L11 27 L11 30 L10.1 31 L9.7 43.8" fill="none" stroke="#96209c" stroke-width=".7" stroke-opacity=".55"/>
</svg>
<svg class="a" style="left:270px;top:358.65px" width="42.00" height="46" viewBox="0 0 42 46">
<defs>
<linearGradient id="g54" x1="0" y1="0" x2="1" y2="0.3"><stop offset="0" stop-color="#6fe062"/><stop offset="1" stop-color="#54d44c"/></linearGradient>
<linearGradient id="g55" x1="0" y1="0" x2="1" y2="1"><stop offset="0" stop-color="#4ed048"/><stop offset="1" stop-color="#3cc03a"/></linearGradient>
<linearGradient id="g56" gradientUnits="userSpaceOnUse" x1="26" y1="0" x2="38" y2="0"><stop offset="0" stop-color="#000" stop-opacity=".26"/><stop offset="1" stop-color="#000" stop-opacity="0"/></linearGradient>
<filter id="g57" x="-20%" y="-20%" width="140%" height="140%"><feGaussianBlur stdDeviation="1.1"/></filter>
</defs>
<path d="M26.4 39.6 L27 29 L36 33.5 L31 40 Z" fill="url(#g56)" filter="url(#g57)"/>
<path d="M1.8 2.3 L26 6.3 L26.3 38.9 L9.8 36.6 L9 9 Z" fill="url(#g55)"/>
<path d="M26.2 26.2 L28.4 27.2 L28.4 38 L26.3 39 Z" fill="#7adc76" stroke="#249424" stroke-width=".4" stroke-opacity=".5"/>
<path d="M27.3 28 L27.3 37.6" stroke="#fff" stroke-width=".7" stroke-opacity=".8"/>
<path d="M1.8 2.3 L10.4 8.7 L10.2 26 L11 27 L11 30 L10.1 31 L9.7 43.8 L2.3 34.7 Z" fill="url(#g54)"/>
<path d="M10.4 8.7 L10.2 26 L11 27 L11 30 L10.1 31 L9.7 43.8" fill="none" stroke="#249424" stroke-width=".7" stroke-opacity=".55"/>
</svg>
<svg class="a" style="left:46px;top:444.5px" width="86.24" height="90.16" viewBox="0 0 44 46">
<defs>
<linearGradient id="g58" x1="0" y1="0" x2="1" y2="0.2"><stop offset="0" stop-color="#fbeeb0"/><stop offset="1" stop-color="#f5e392"/></linearGradient>
<linearGradient id="g59" x1="0" y1="0" x2="1" y2="0.6"><stop offset="0" stop-color="#ead172"/><stop offset=".35" stop-color="#f3df8a"/><stop offset="1" stop-color="#ead172"/></linearGradient>
<linearGradient id="g60" gradientUnits="userSpaceOnUse" x1="26" y1="0" x2="38" y2="0"><stop offset="0" stop-color="#000" stop-opacity=".22"/><stop offset="1" stop-color="#000" stop-opacity="0"/></linearGradient>
<linearGradient id="g62" x1="0" y1="0" x2="0" y2="1"><stop offset="0" stop-color="#fffdf0"/><stop offset=".7" stop-color="#f4f4f0"/><stop offset="1" stop-color="#9cc0e0"/></linearGradient>
<filter id="g61" x="-30%" y="-30%" width="160%" height="160%"><feGaussianBlur stdDeviation="1.3"/></filter>
</defs>
<path d="M26 37.6 L27 28.4 L38 32.5 L32 39.8 Z" fill="url(#g60)" filter="url(#g61)"/>
<path d="M1.6 2.6 L25.4 6.2 L25.8 37.1 L9 39.3 L8.6 9 Z" fill="url(#g59)"/>
<path d="M25.7 27 L27.5 27.8 L27.5 36.5 L25.8 37.2 Z" fill="url(#g62)" stroke="#c4a64a" stroke-width=".3" stroke-opacity=".6"/>
<path d="M1.6 2.6 L8.8 7.6 Q9.6 8.2 9.6 9.2 L9.5 28 L8.9 28.8 L8.3 43.8 L1.9 35.8 Z" fill="url(#g58)"/>
<path d="M8.8 7.6 Q9.6 8.2 9.6 9.2 L9.5 28 L8.9 28.8 L8.3 43.8" fill="none" stroke="#c4a64a" stroke-width=".45" stroke-opacity=".55"/>
</svg>
<div class="a" id="tooltip"></div>
<span class="t crumb" style="left:125px;top:52.5px;font-size:11px;letter-spacing:-0.037px;">Computer</span>
<span class="t crumb" style="left:193px;top:52.5px;font-size:11px;letter-spacing:-0.408px;">Local Disk (C:)</span>
<span class="t crumb" style="left:280px;top:52.5px;font-size:11px;letter-spacing:-0.293px;">Documents</span>
<span class="t search" style="left:455px;top:52.5px;font-size:11px;letter-spacing:-0.472px;">Search Documents</span>
<span class="t tb" style="left:42px;top:82.5px;font-size:11px;letter-spacing:-0.330px;">Organize</span>
<span class="t tb" style="left:122px;top:82.5px;font-size:11px;letter-spacing:-0.116px;">Include in library</span>
<span class="t tb" style="left:240px;top:82.5px;font-size:11px;letter-spacing:-0.298px;">Share with</span>
<span class="t tb" style="left:327px;top:82.5px;font-size:11px;letter-spacing:-0.058px;">New folder</span>
<span class="t nav" style="left:71px;top:106.8px;font-size:11px;letter-spacing:-0.344px;">Pictures</span>
<span class="t nav" style="left:80px;top:125.4px;font-size:11px;letter-spacing:-0.224px;">My Pictures</span>
<span class="t nav" style="left:80px;top:144.1px;font-size:11px;letter-spacing:-0.251px;">Public Pictures</span>
<span class="t nav" style="left:80px;top:162.7px;font-size:11px;letter-spacing:-0.331px;">Photos (C:)</span>
<span class="t nav" style="left:71px;top:181.3px;font-size:11px;letter-spacing:-0.406px;">Videos</span>
<span class="t nav" style="left:62px;top:218.6px;font-size:11px;letter-spacing:0.000px;">Computer</span>
<span class="t nav" style="left:71px;top:237.2px;font-size:11px;letter-spacing:-0.408px;">Local Disk (C:)</span>
<span class="t nav" style="left:80px;top:255.8px;font-size:11px;letter-spacing:-0.182px;">Documents</span>
<span class="t nav" style="left:89px;top:274.5px;font-size:11px;letter-spacing:-0.516px;">Books</span>
<span class="t nav" style="left:89px;top:293.1px;font-size:11px;letter-spacing:-0.102px;">Materials for summit</span>
<span class="t nav" style="left:89px;top:311.7px;font-size:11px;letter-spacing:-0.208px;">Photos</span>
<span class="t nav" style="left:89px;top:330.4px;font-size:11px;letter-spacing:-0.034px;">Temporary folder</span>
<span class="t nav" style="left:89px;top:349.0px;font-size:11px;letter-spacing:0.051px;">Training kit</span>
<span class="t nav" style="left:89px;top:367.6px;font-size:11px;letter-spacing:-0.188px;">Video</span>
<span class="t nav" style="left:80px;top:386.2px;font-size:11px;letter-spacing:-0.379px;">PerfLogs</span>
<span class="t nav" style="left:80px;top:404.9px;font-size:11px;letter-spacing:-0.344px;">Program Files</span>
<span class="t nav" style="left:80px;top:423.5px;font-size:11px;letter-spacing:-0.399px;">Program Files (x86)</span>
<span class="t fname" style="left:315px;top:118.0px;font-size:11px;letter-spacing:-0.516px;">Books</span>
<span class="t ftype" style="left:315px;top:132.0px;font-size:11px;letter-spacing:-0.209px;">File folder</span>
<span class="t fname" style="left:315px;top:167.7px;font-size:11px;letter-spacing:-0.052px;">Materials for summit</span>
<span class="t ftype" style="left:315px;top:181.7px;font-size:11px;letter-spacing:-0.209px;">File folder</span>
<span class="t fname" style="left:315px;top:217.5px;font-size:11px;letter-spacing:-0.208px;">Photos</span>
<span class="t ftype" style="left:315px;top:231.5px;font-size:11px;letter-spacing:-0.209px;">File folder</span>
<span class="t fname" style="left:315px;top:267.2px;font-size:11px;letter-spacing:-0.034px;">Temporary folder</span>
<span class="t ftype" style="left:315px;top:281.2px;font-size:11px;letter-spacing:-0.209px;">File folder</span>
<span class="t fname" style="left:315px;top:316.9px;font-size:11px;letter-spacing:-0.116px;">Training kit</span>
<span class="t ftype" style="left:315px;top:330.9px;font-size:11px;letter-spacing:-0.209px;">File folder</span>
<span class="t fname" style="left:315px;top:366.6px;font-size:11px;letter-spacing:-0.487px;">Video</span>
<span class="t ftype" style="left:315px;top:380.6px;font-size:11px;letter-spacing:-0.209px;">File folder</span>
<span class="t tip" style="left:446px;top:249.5px;font-size:11px;letter-spacing:-0.114px;">Family photos</span>
<span class="t tip" style="left:446px;top:262.7px;font-size:11px;letter-spacing:-0.337px;">Date created: 9/1/2009 12:28 AM</span>
<span class="t tip" style="left:446px;top:276.0px;font-size:11px;letter-spacing:-0.062px;">Empty folder</span>
<span class="t det" style="left:137px;top:451.5px;font-size:11.5px;letter-spacing:0.132px;">6 items</span>
<span class="t wm" style="left:14px;top:35.0px;line-height:24px;height:24px;font-size:19px;transform:scaleX(1.1470);transform-origin:0 0;">SOFTCOZAR.COM</span>
</body>
</html>
